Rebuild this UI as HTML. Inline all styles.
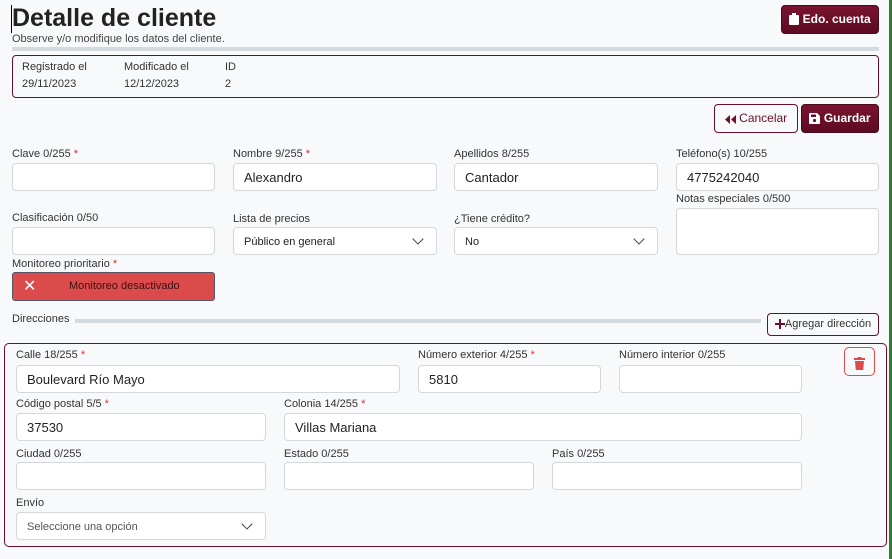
<!DOCTYPE html><html><head><meta charset="utf-8"><style>
*{box-sizing:border-box}body{margin:0;width:892px;height:559px;background:#f8f9fa;font-family:"Liberation Sans",sans-serif;color:#212529;position:relative;overflow:hidden}
.a{position:absolute}
.l{position:absolute;font-size:11px;color:#333}
.l b{color:#e03030;font-weight:normal}
.i{position:absolute;height:28px;background:#fff;border:1px solid #d4d8dc;border-radius:4px;font-size:13px;padding:6px 0 0 10px;color:#222}
.s{font-size:11px;padding-top:8px}
.s:after{content:"";position:absolute;right:14px;top:7px;width:7px;height:7px;border-right:1.5px solid #444;border-bottom:1.5px solid #444;transform:rotate(45deg)}
.btn{position:absolute;border-radius:4px;font-size:12px;font-weight:bold;color:#fff;background:linear-gradient(#7a1430,#5c0b22);border:1px solid #4a0a1b;text-align:center;line-height:26px}
svg{vertical-align:-2px}
</style></head><body>
<div class="a" style="right:0;top:0;width:3px;height:559px;background:#2e7d32"></div>
<div class="a" style="left:11px;top:5px;width:1px;height:28px;background:#000"></div>
<div class="a" style="left:12px;top:4px;font-size:25px;font-weight:bold;color:#222">Detalle de cliente</div>
<div class="a" style="left:12px;top:33px;font-size:11px;color:#444">Observe y/o modifique los datos del cliente.</div>
<div class="a" style="left:12px;top:47px;width:867px;height:4px;background:#d3dbe0"></div>
<div class="btn" style="left:781px;top:5px;width:98px;height:29px"><svg width="10" height="12" viewBox="0 0 10 12"><rect x="0" y="2" width="10" height="10" rx="1" fill="#fff"/><rect x="3" y="0" width="4" height="3" fill="#fff"/></svg> Edo. cuenta</div>
<div class="a" style="left:12px;top:55px;width:867px;height:43px;border:1px solid #6b0f2a;border-radius:4px"></div>
<div class="l" style="left:22px;top:61px">Registrado el</div><div class="l" style="left:22px;top:78px">29/11/2023</div>
<div class="l" style="left:124px;top:61px">Modificado el</div><div class="l" style="left:124px;top:78px">12/12/2023</div>
<div class="l" style="left:225px;top:61px">ID</div><div class="l" style="left:225px;top:78px">2</div>
<div class="a" style="left:714px;top:104px;width:84px;height:29px;border:1px solid #6b0f2a;border-radius:4px;font-size:12px;color:#6b0f2a;text-align:center;line-height:27px"><svg width="11" height="9" viewBox="0 0 11 9"><path d="M5 0L0 4.5 5 9zM11 0L6 4.5 11 9z" fill="#6b0f2a"/></svg> Cancelar</div>
<div class="btn" style="left:801px;top:104px;width:78px;height:29px"><svg width="11" height="11" viewBox="0 0 11 11"><path d="M0 1a1 1 0 011-1h7l3 3v7a1 1 0 01-1 1H1a1 1 0 01-1-1z" fill="#fff"/><rect x="2" y="1.5" width="5" height="2.5" fill="#6b0f2a"/><circle cx="5.5" cy="7.5" r="1.6" fill="#6b0f2a"/></svg> Guardar</div>

<div class="l" style="left:12px;top:148px">Clave 0/255 <b>*</b></div><div class="i" style="left:12px;top:163px;width:203px"></div>
<div class="l" style="left:233px;top:148px">Nombre 9/255 <b>*</b></div><div class="i" style="left:233px;top:163px;width:204px">Alexandro</div>
<div class="l" style="left:454px;top:148px">Apellidos 8/255</div><div class="i" style="left:454px;top:163px;width:204px">Cantador</div>
<div class="l" style="left:676px;top:148px">Teléfono(s) 10/255</div><div class="i" style="left:676px;top:163px;width:203px">4775242040</div>
<div class="l" style="left:12px;top:212px">Clasificación 0/50</div><div class="i" style="left:12px;top:227px;width:203px"></div>
<div class="l" style="left:233px;top:213px">Lista de precios</div><div class="i s" style="left:233px;top:227px;width:204px">Público en general</div>
<div class="l" style="left:454px;top:213px">¿Tiene crédito?</div><div class="i s" style="left:454px;top:227px;width:204px">No</div>
<div class="l" style="left:676px;top:193px">Notas especiales 0/500</div><div class="i" style="left:676px;top:208px;width:203px;height:47px"></div>
<div class="l" style="left:12px;top:258px">Monitoreo prioritario <b>*</b></div>
<div class="a" style="left:12px;top:272px;width:203px;height:29px;background:#dc4b4b;border:1px solid #556;border-radius:3px;font-size:11px;color:#3a1010;line-height:27px"><span style="color:#fff;font-size:16px;position:absolute;left:10px">✕</span><span style="position:absolute;left:56px">Monitoreo desactivado</span></div>
<div class="l" style="left:12px;top:313px">Direcciones</div>
<div class="a" style="left:75px;top:319px;width:686px;height:4px;background:#d3dbe0"></div>
<div class="a" style="left:767px;top:313px;width:112px;height:23px;border:1px solid #6b0f2a;border-radius:4px;font-size:11px;color:#333;text-align:center;line-height:21px"><svg width="10" height="10" viewBox="0 0 10 10"><path d="M4 0h2v4h4v2H6v4H4V6H0V4h4z" fill="#6b0f2a"/></svg>Agregar dirección</div>
<div class="a" style="left:4px;top:343px;width:883px;height:204px;border:1px solid #6b0f2a;border-radius:5px"></div>
<div class="a" style="left:844px;top:347px;width:31px;height:29px;border:1px solid #dc4b4b;border-radius:5px;text-align:center;padding-top:7px"><svg width="11" height="13" viewBox="0 0 11 13"><rect x="0" y="1" width="11" height="2" fill="#dc4b4b"/><rect x="3.5" y="0" width="4" height="2" fill="#dc4b4b"/><path d="M1 4h9l-.8 9H1.8z" fill="#dc4b4b"/></svg></div>
<div class="l" style="left:16px;top:349px">Calle 18/255 <b>*</b></div><div class="i" style="left:16px;top:365px;width:384px">Boulevard Río Mayo</div>
<div class="l" style="left:418px;top:349px">Número exterior 4/255 <b>*</b></div><div class="i" style="left:418px;top:365px;width:183px">5810</div>
<div class="l" style="left:619px;top:349px">Número interior 0/255</div><div class="i" style="left:619px;top:365px;width:183px"></div>
<div class="l" style="left:16px;top:398px">Código postal 5/5 <b>*</b></div><div class="i" style="left:16px;top:413px;width:250px">37530</div>
<div class="l" style="left:284px;top:398px">Colonia 14/255 <b>*</b></div><div class="i" style="left:284px;top:413px;width:518px">Villas Mariana</div>
<div class="l" style="left:16px;top:448px">Ciudad 0/255</div><div class="i" style="left:16px;top:462px;width:250px"></div>
<div class="l" style="left:284px;top:448px">Estado 0/255</div><div class="i" style="left:284px;top:462px;width:250px"></div>
<div class="l" style="left:552px;top:448px">País 0/255</div><div class="i" style="left:552px;top:462px;width:250px"></div>
<div class="l" style="left:16px;top:497px">Envío</div><div class="i s" style="left:16px;top:512px;width:250px;color:#555">Seleccione una opción</div>
</body></html>
